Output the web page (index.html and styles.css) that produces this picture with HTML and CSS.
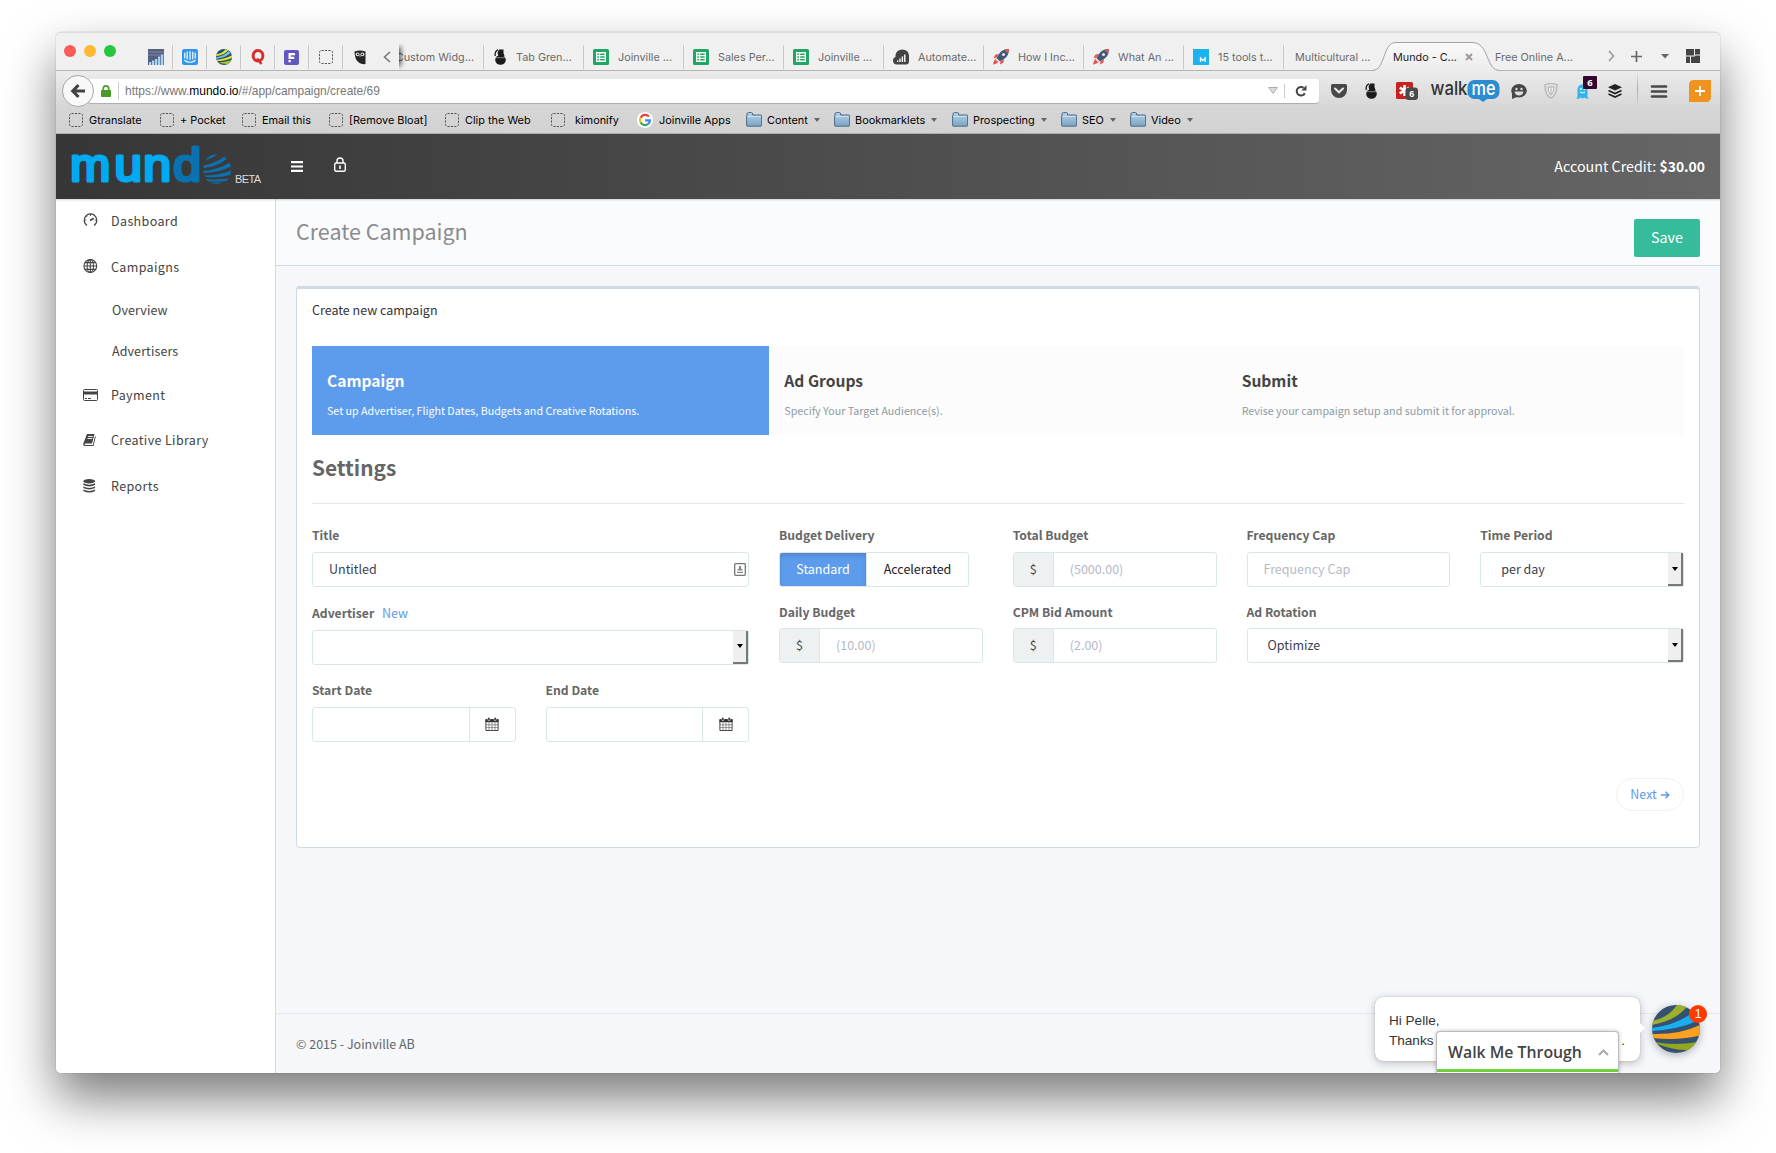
FILE: index.html
```
<!DOCTYPE html>
<html lang="en">
<head>
<meta charset="utf-8">
<title>Mundo - Create Campaign</title>
<link rel="stylesheet" href="styles.css">
</head>
<body>
<svg class="defs" width="0" height="0" aria-hidden="true">
  <defs>
    <linearGradient id="folderFill" x1="0" y1="0" x2="0" y2="1"><stop offset="0" stop-color="#b9d3e6"/><stop offset="1" stop-color="#7ba3c4"/></linearGradient>
    <linearGradient id="tabFill" x1="0" y1="0" x2="0" y2="1"><stop offset="0" stop-color="#fafafa"/><stop offset="1" stop-color="#ebebeb"/></linearGradient>
    <clipPath id="ball"><circle cx="24" cy="24" r="24"/></clipPath>
    <symbol id="i-blank" viewBox="0 0 14 14"><rect x=".5" y=".5" width="13" height="13" rx="2" fill="none" stroke="#555" stroke-dasharray="2.2 1.2"/></symbol>
    <symbol id="i-folder" viewBox="0 0 16 15"><path d="M1 4V2q0-1.400 1.400-1.400h3.200q1 0 1 1.400V3h8.400q.6 0 .6.600v10q0 .6-.6.600H1.200q-.6 0-.6-.6V4z" fill="url(#folderFill)" stroke="#4c6d88"/><path d="M1.200 4.500h13.600" stroke="#d6e6f2" stroke-width=".8"/></symbol>
    <symbol id="i-sheet" viewBox="0 0 16 16"><rect width="16" height="16" rx="1.500" fill="#23a566"/><path d="M3 3h10v10H3z" fill="#fff"/><path d="M4.300 4.500h1.700v1.500H4.300zM7.200 4.500h4.500v1.500H7.200zM4.300 7.200h1.700v1.500H4.300zM7.200 7.200h4.500v1.500H7.200zM4.300 9.900h1.700v1.500H4.300zM7.200 9.900h4.500v1.500H7.200z" fill="#23a566"/></symbol>
    <symbol id="i-globe" viewBox="0 0 48 48"><g clip-path="url(#ball)"><path d="M0 0h48v48H0z" fill="#34516f"/><path d="M0 16Q16 13 25 0H36Q26 15 0 20z" fill="#9db02c"/><path d="M0 23Q24 20 40 8l5 8Q28 24 0 26z" fill="#19aef2"/><path d="M0 29Q28 30 50 19v11Q28 36 0 33z" fill="#fba01f"/><path d="M3 37Q22 41 46 37l-8 8Q22 46 3 38z" fill="#93a61f"/></g></symbol>
    <symbol id="i-rocket" viewBox="0 0 16 16"><path d="M16 0Q9 0 6 5L3.500 9 7 12.500 11 10q5-3 5-10z" fill="#3f5a78"/><path d="M16 0q-2.500 0-4.500 1L15 4.500Q16 2.500 16 0zM6 5L2.500 5.500.5 9l3-.3zM11 10l-.5 3.500L7 15.500l.3-3z" fill="#e8554e"/><path d="M3.500 9.500Q1 10 0 15.500q5-1 6-3.200l-1.300.7-.6-1.500-1.500.3z" fill="#e8554e"/><circle cx="10.500" cy="5.500" r="1.500" fill="#dfe8ef"/></symbol>
    <symbol id="i-bomb" viewBox="0 0 14 16"><ellipse cx="7.500" cy="11" rx="5.300" ry="4.800" fill="#1b1b1b"/><path d="M4.500 3.500L6 .5h4.500V4l1 3-6 .5z" fill="#1b1b1b"/><path d="M5 .8Q1.500 2 2.200 7" fill="none" stroke="#1b1b1b" stroke-width="1.300"/><path d="M3 8.700h9" stroke="#aaa" stroke-width=".7"/></symbol>
    <symbol id="i-cal" viewBox="0 0 14 14"><path d="M.9 3h12.200v10.500H.9z" fill="#fff" stroke="#333" stroke-width=".9"/><path d="M.5 2h13v3.200H.5z" fill="#333"/><path d="M1 7.800h12M1 10.600h12M4 5v8.500M7 5v8.500M10 5v8.500" stroke="#555" stroke-width=".6"/><rect x="2.700" y=".3" width="2.200" height="3.400" rx="1" fill="#333" stroke="#fff" stroke-width=".6"/><rect x="9.100" y=".3" width="2.200" height="3.400" rx="1" fill="#333" stroke="#fff" stroke-width=".6"/></symbol>
  </defs>
</svg>

<div class="window">
  <header class="tabstrip">
    <div class="lights"><i class="red"></i><i class="amber"></i><i class="green"></i></div>
    <div class="pinned">
      <span><svg width="16" height="16" viewBox="0 0 16 16"><path d="M0 0h16v16H0z" fill="#55607f"/><path d="M0 3h16M0 6h16" stroke="#7f86a5"/><path d="M1 16v-3h2.300v3zM4 16v-4.500h2.300V16zM7 16v-6h2.300v6zM10 16V7.500h2.300V16zM13 16V5.500h2.300V16z" fill="#a9d2f5"/></svg></span>
      <span><svg width="16" height="16" viewBox="0 0 16 16"><rect width="16" height="16" rx="2" fill="#3296ed"/><path d="M2.800 4v5M5.200 3v7M8 2.600v7.800M10.800 3v7M13.200 4v5M2.800 11.500Q8 15 13.200 11.500" fill="none" stroke="#fff" stroke-width="1.200" stroke-linecap="round"/></svg></span>
      <span><svg width="16" height="16" viewBox="0 0 48 48"><g clip-path="url(#ball)"><path d="M0 0h48v48H0z" fill="#24506b"/><path d="M0 16Q20 14 31-2l8 2Q28 18 0 22z" fill="#e6e032"/><path d="M0 25Q24 22 38 6l5 7Q28 27 0 29z" fill="#6cc3ec"/><path d="M0 32Q28 31 48 18v8Q30 36 0 36z" fill="#f2e22c"/><path d="M4 40Q20 41 46 34l-8 11Q22 46 4 40z" fill="#a8c63c"/></g></svg></span>
      <span><svg width="14" height="16" viewBox="0 0 14 16"><ellipse cx="7" cy="6.800" rx="4.900" ry="5.300" fill="none" stroke="#d5302c" stroke-width="3"/><path d="M6 9.500l4.500 5.500" stroke="#d5302c" stroke-width="2.600"/></svg></span>
      <span><svg width="15" height="15" viewBox="0 0 15 15"><rect width="15" height="15" rx="2" fill="#6057c2"/><path d="M4.500 3h6.500v2.200H6.800v1.600h3.400V9H6.800H4.500zM4.500 10h2.300v2.300H4.500z" fill="#fff"/></svg></span>
      <span><svg width="14" height="14"><use href="#i-blank"/></svg></span>
      <span><svg width="12" height="15" viewBox="0 0 12 15"><path d="M.5 1.500Q6-.5 11.500 1.500V14q-4 .5-6-1Q.5 10 .5 1.500z" fill="#262626"/><circle cx="3.600" cy="4.300" r="1.900" fill="#eee"/><circle cx="8.400" cy="4.300" r="1.900" fill="#eee"/><circle cx="3.800" cy="4.300" r=".9"/><circle cx="8.200" cy="4.300" r=".9"/><path d="M5.200 5.500h1.600L6 7.500z" fill="#ccc"/></svg></span>
    </div>
    <div class="scroll-left"><svg width="8" height="12" viewBox="0 0 8 12"><path d="M7 1L1.500 6 7 11" fill="none" stroke="#777" stroke-width="1.600"/></svg></div>
    <nav class="tabs">
      <a class="cut"><span>Custom Widg...</span></a>
      <a><svg width="14" height="16"><use href="#i-bomb"/></svg><span>Tab Gren...</span></a>
      <a><svg width="16" height="16"><use href="#i-sheet"/></svg><span>Joinville ...</span></a>
      <a><svg width="16" height="16"><use href="#i-sheet"/></svg><span>Sales Per...</span></a>
      <a><svg width="16" height="16"><use href="#i-sheet"/></svg><span>Joinville ...</span></a>
      <a><svg width="16" height="16" viewBox="0 0 16 16"><path d="M4 15.500Q0 15.500 0 11.500 0 8.500 2.500 8 2 1 9 .5q6.500 0 7 6V12q0 3.500-3 3.500z" fill="#444"/><path d="M4 13v-1.500h1.300V13zM6.300 13V9.500h1.400V13zM8.700 13V7.500h1.400V13zM11.100 13V5.500h1.400V13z" fill="#fff"/></svg><span>Automate...</span></a>
      <a><svg width="16" height="16"><use href="#i-rocket"/></svg><span>How I Inc...</span></a>
      <a><svg width="16" height="16"><use href="#i-rocket"/></svg><span>What An ...</span></a>
      <a><svg width="16" height="16" viewBox="0 0 16 16"><path d="M0 0h16v16H0z" fill="#1ab3f0"/><path d="M7.500 13V9l2.300 2.600L12.100 9v4" fill="none" stroke="#fff" stroke-width="1.300"/></svg><span>15 tools t...</span></a>
      <a class="plain"><span>Multicultural ...</span></a>
      <a class="active"><svg class="shape" width="128" height="30" viewBox="0 0 128 30"><path d="M0 28.500C14 28.500 10 .5 24 .5H100C118 .5 113 28.500 128 28.500V30H0z" fill="url(#tabFill)"/><path d="M0 28.500C14 28.500 10 .5 24 .5H100C118 .5 113 28.500 128 28.500" fill="none" stroke="#a3a3a3"/></svg><span>Mundo - C...</span><svg class="x" width="8" height="8" viewBox="0 0 8 8"><path d="M1 1l6 6M7 1L1 7" stroke="#9a9a9a" stroke-width="2"/></svg></a>
      <a class="plain last"><span>Free Online A...</span></a>
    </nav>
    <div class="strip-tools">
      <svg width="7" height="12" viewBox="0 0 7 12"><path d="M1 1l4.500 5L1 11" fill="none" stroke="#999" stroke-width="1.600"/></svg>
      <svg width="11" height="11" viewBox="0 0 11 11"><path d="M5.500 0v11M0 5.500h11" stroke="#666" stroke-width="1.700"/></svg>
      <svg width="8" height="5" viewBox="0 0 8 5"><path d="M0 0h8L4 4.500z" fill="#666"/></svg>
      <svg width="14" height="14" viewBox="0 0 14 14"><path d="M0 0h8v6.500H0zM9 0h5v5.500H9zM0 7.500h4v6.500H0zM5 7.500h4v-1h5V14H5z" fill="#444"/></svg>
    </div>
  </header>

  <div class="navbar">
    <div class="back"><svg width="14" height="14" viewBox="0 0 14 14"><path d="M7.500 1L1.800 7l5.700 6M2 7h12" fill="none" stroke="#444" stroke-width="3.200"/></svg></div>
    <div class="urlbar">
      <svg class="secure" width="10" height="12" viewBox="0 0 10 12"><path d="M2.300 6V3.500a2.700 2.700 0 0 1 5.400 0V6" fill="none" stroke="#4c9a26" stroke-width="1.700"/><rect y="5" width="10" height="7" rx=".8" fill="#4c9a26"/></svg>
      <div class="url">https://www.<b>mundo.io</b>/#/app/campaign/create/69</div>
      <svg width="10" height="7" viewBox="0 0 10 7"><path d="M.7.500h8.600L5 6.400z" fill="#ddd" stroke="#aaa"/></svg>
      <div class="reload"><svg width="12" height="12" viewBox="0 0 12 12"><path d="M9.800 8.200A4.300 4.300 0 1 1 8.600 2.800" fill="none" stroke="#444" stroke-width="2"/><path d="M11.500.3v5.200H6.300z" fill="#444"/></svg></div>
    </div>
    <div class="addons">
      <svg width="16" height="14" viewBox="0 0 16 14"><path d="M1.500 0h13Q16 0 16 1.500V6a8 8 0 0 1-16 0V1.500Q0 0 1.500 0z" fill="#474747"/><path d="M4 4.500l4 3.800 4-3.800" fill="none" stroke="#e8e8e8" stroke-width="2" stroke-linecap="round"/></svg>
      <svg class="g17" width="14" height="16"><use href="#i-bomb"/></svg>
      <svg class="g18" width="22" height="18" viewBox="0 0 22 18"><rect width="17" height="17" rx="1.500" fill="#c9211e"/><path d="M8.500 3v11M3.700 5.700l9.600 5.600M13.300 5.700l-9.600 5.600" stroke="#fff" stroke-width="2.600"/><rect x="9.500" y="5.500" width="12.500" height="12.500" rx="3" fill="#4a4a4a"/><text x="15.700" y="15" text-anchor="middle" class="count">6</text></svg>
      <svg class="g13" width="69" height="24" viewBox="0 0 69 24"><rect x="36.500" y="1" width="32" height="19" rx="7" fill="#2b8ccf"/><path d="M47 19.500l5 3.500 5-3.500z" fill="#2b8ccf"/><text x="-.5" y="15.500" textLength="37" lengthAdjust="spacingAndGlyphs" class="wm-walk">walk</text><text x="40.500" y="15.500" textLength="24" lengthAdjust="spacingAndGlyphs" class="wm-me">me</text></svg>
      <svg class="g11" width="16" height="15" viewBox="0 0 16 15"><ellipse cx="8" cy="6.800" rx="7.800" ry="6.700" fill="#474747"/><path d="M1 9v6l5-2z" fill="#474747"/><circle cx="5.500" cy="5" r="1.200" fill="#ddd"/><circle cx="10.500" cy="5" r="1.200" fill="#ddd"/><path d="M3.500 7.500h9q-.8 4-4.500 4t-4.500-4z" fill="#ddd"/></svg>
      <svg class="g17" width="14" height="16" viewBox="0 0 14 16"><path d="M1 1.500Q7-.5 13 1.500 13.500 12 7 15 .5 12 1 1.500z" fill="#dedede" stroke="#b4b4b4" stroke-width="1.200"/><path d="M4 4h6q0 5-3 8-3-3-3-8z" fill="#f2f2f2" stroke="#b4b4b4"/><path d="M7 4v7" stroke="#b4b4b4"/></svg>
      <div class="ghost g18"><svg width="13" height="15" viewBox="0 0 13 15"><path d="M1.500 13V6Q1.500.5 6.500.5t5 5.500v7l1.500 1.500h-3L8.500 13.500l-2 1-2-1L3 14.800 0 14.500z" fill="#31b5ea"/><circle cx="4.800" cy="5" r="1" fill="#fff"/><circle cx="8.300" cy="5" r="1" fill="#fff"/><path d="M4 8q2.500 2 5 0" fill="none" stroke="#fff"/></svg><b>6</b></div>
      <svg class="g16" width="14" height="14" viewBox="0 0 14 14"><path d="M7 0l7 3.200-7 3.300L0 3.200z" fill="#222"/><path d="M.5 6.500L7 9.600l6.500-3.100M.5 10L7 13l6.500-3" fill="none" stroke="#222" stroke-width="1.700"/></svg>
      <i class="rule"></i>
      <svg class="g13" width="16" height="13" viewBox="0 0 16 13"><path d="M1 1.500h14M1 6.500h14M1 11.500h14" stroke="#474747" stroke-width="2.700" stroke-linecap="round"/></svg>
      <svg class="end" width="22" height="22" viewBox="0 0 22 22"><path d="M5 0h17v17q0 5-5 5H0V5q0-5 5-5z" fill="#f0931e"/><path d="M11 6v10M6 11h10" stroke="#fff" stroke-width="1.800"/></svg>
    </div>
  </div>

  <div class="bookmarks">
    <a><svg width="14" height="14"><use href="#i-blank"/></svg>Gtranslate</a>
    <a><svg width="14" height="14"><use href="#i-blank"/></svg>+ Pocket</a>
    <a><svg width="14" height="14"><use href="#i-blank"/></svg>Email this</a>
    <a><svg width="14" height="14"><use href="#i-blank"/></svg>[Remove Bloat]</a>
    <a><svg width="14" height="14"><use href="#i-blank"/></svg>Clip the Web</a>
    <a class="wide"><svg width="14" height="14"><use href="#i-blank"/></svg>kimonify</a>
    <a><svg width="16" height="16" viewBox="0 0 16 16"><circle cx="8" cy="8" r="8" fill="#fff"/><g fill="none" stroke-width="2.200"><path d="M12 4.600A5 5 0 0 0 3.600 5.700" stroke="#ea4335"/><path d="M3.600 5.700a5 5 0 0 0 0 4.800" stroke="#fbbc05"/><path d="M3.600 10.500a5 5 0 0 0 7.700 1.300" stroke="#34a853"/><path d="M11.300 11.800A5 5 0 0 0 13 8.300H8" stroke="#4285f4"/></g></svg>Joinville Apps</a>
    <a><svg width="16" height="15"><use href="#i-folder"/></svg>Content<i></i></a>
    <a><svg width="16" height="15"><use href="#i-folder"/></svg>Bookmarklets<i></i></a>
    <a><svg width="16" height="15"><use href="#i-folder"/></svg>Prospecting<i></i></a>
    <a><svg width="16" height="15"><use href="#i-folder"/></svg>SEO<i></i></a>
    <a><svg width="16" height="15"><use href="#i-folder"/></svg>Video<i></i></a>
  </div>

  <div class="app">
    <header class="appbar">
      <svg class="logo" width="192" height="46" viewBox="0 0 192 46">
        <text y="38.800" class="lg-mun"><tspan x="1.200" textLength="40" lengthAdjust="spacingAndGlyphs">m</tspan></text>
        <text y="38.800" class="lg-mun"><tspan x="45.500" textLength="27.500" lengthAdjust="spacingAndGlyphs">u</tspan></text>
        <text y="38.800" class="lg-mun"><tspan x="74" textLength="28" lengthAdjust="spacingAndGlyphs">n</tspan></text>
        <text x="104" y="38.800" textLength="28" lengthAdjust="spacingAndGlyphs" class="lg-d">d</text>
        <path fill="#0a72b0" d="M136.500 18Q140 12.500 148.500 12.200 143 16.500 136.500 18zM134.500 23.500Q147 21 155.500 14.500L157.500 17Q148 25 134.500 26zM134 29Q150 27.500 160.500 20.500L162 24.500Q149 31 134.500 31zM135 33.500Q150 33.500 162 28.500L161.500 33Q149 36 137 35zM137 37q11 1.300 22.500-.5l-2 2.500q-10 1-18.500.2zM141.500 40.500h12q-6 2.500-12 0z"/>
        <text x="166" y="40.500" textLength="26" class="lg-beta">BETA</text>
      </svg>
      <svg class="burger" width="12" height="11" viewBox="0 0 12 11"><path d="M0 1.200h12M0 5.500h12M0 9.800h12" stroke="#fff" stroke-width="2.200"/></svg>
      <svg class="lock" width="12" height="15" viewBox="0 0 12 15"><rect x=".7" y="6" width="10.600" height="8.300" rx="1.500" fill="none" stroke="#fff" stroke-width="1.400"/><path d="M3 6V4a3 3 0 0 1 6 0v2" fill="none" stroke="#fff" stroke-width="1.400"/><path d="M6 8.500v3.500" stroke="#fff" stroke-width="1.600"/></svg>
      <div class="credit">Account Credit: <b>$30.00</b></div>
    </header>

    <div class="body">
      <aside class="sidebar">
        <a class="first"><svg width="15" height="14" viewBox="0 0 15 14"><path d="M4 12.500A6.300 6.300 0 1 1 11 12.500" fill="none" stroke="#444" stroke-width="1.300"/><path d="M7 7.500l3.800-2.200" stroke="#444" stroke-width="1.600"/><path d="M7.500 1v2M1.500 7h1.800M11.800 7h1.800M3.200 3l1 1" stroke="#444" stroke-width=".9"/></svg>Dashboard</a>
        <a class="second"><svg width="15" height="14" viewBox="0 0 15 14"><g fill="none" stroke="#444" stroke-width="1.100"><circle cx="7.300" cy="7" r="6.400"/><ellipse cx="7.300" cy="7" rx="3.200" ry="6.400"/><path d="M7.300.6v12.800M.9 7h12.800M2 3.600h10.600M2 10.400h10.600"/></g></svg>Campaigns</a>
        <a class="sub">Overview</a>
        <a class="sub">Advertisers</a>
        <a><svg width="15" height="12" viewBox="0 0 15 12"><rect x=".5" y=".5" width="14" height="11" rx="1" fill="none" stroke="#444"/><path d="M0 2.500h15v3H0z" fill="#444"/><path d="M2 9.500h2M5 9.500h3" stroke="#444"/></svg>Payment</a>
        <a><svg width="15" height="12" viewBox="0 0 15 12"><path d="M4 0h7.500L9 9.500H2.500q-1 0-1 .7t1 .7h7.300L12 2.200l.8.300L10.500 12H2Q-.3 12 .3 9.500z" fill="#444"/><path d="M5 2.500h4.800M4.500 4.500h4.800" stroke="#fff" stroke-width=".9"/></svg>Creative Library</a>
        <a><svg width="15" height="14" viewBox="0 0 15 14"><ellipse cx="6.200" cy="2.300" rx="6" ry="2.200" fill="#444"/><path d="M.3 4.300q5.900 2.800 11.800 0v1.800q-5.900 2.800-11.800 0zM.3 7.500q5.900 2.800 11.800 0v1.600q-5.900 2.800-11.800 0zM.3 10.500q5.900 2.800 11.800 0v1.400q-5.900 3.400-11.800 0z" fill="#444"/></svg>Reports</a>
      </aside>

      <main class="main">
        <div class="pagehead"><h1>Create Campaign</h1><button class="save">Save</button></div>
        <section class="card">
          <p class="cardtitle">Create new campaign</p>
          <div class="steps">
            <div class="on"><h3>Campaign</h3><p>Set up Advertiser, Flight Dates, Budgets and Creative Rotations.</p></div>
            <div><h3>Ad Groups</h3><p>Specify Your Target Audience(s).</p></div>
            <div><h3>Submit</h3><p>Revise your campaign setup and submit it for approval.</p></div>
          </div>
          <h2>Settings</h2>
          <div class="form">
            <div class="fields left">
              <div class="field two"><label>Title</label><div class="input">Untitled<svg class="contact" width="12" height="13" viewBox="0 0 12 13"><rect x=".7" y=".7" width="10.600" height="11.600" rx=".8" fill="#fff" stroke="#777" stroke-width="1.300"/><path d="M3.500 7.500h5v-1L7 5.500V3H5v2.500L3.500 6.500zM3 8.700h6v1.200H3z" fill="#888"/></svg></div></div>
              <div class="field adv two"><label>Advertiser <a>New</a></label><div class="input select"><i></i></div></div>
              <div class="field"><label>Start Date</label><div class="input date"><span><svg width="14" height="14"><use href="#i-cal"/></svg></span></div></div>
              <div class="field"><label>End Date</label><div class="input date"><span><svg width="14" height="14"><use href="#i-cal"/></svg></span></div></div>
            </div>
            <div class="fields right">
              <div class="field"><label>Budget Delivery</label><div class="toggle"><b>Standard</b><span>Accelerated</span></div></div>
              <div class="field"><label>Total Budget</label><div class="input money"><span>$</span>(5000.00)</div></div>
              <div class="field"><label>Frequency Cap</label><div class="input ph">Frequency Cap</div></div>
              <div class="field"><label>Time Period</label><div class="input select">per day<i></i></div></div>
              <div class="field low"><label>Daily Budget</label><div class="input money"><span>$</span>(10.00)</div></div>
              <div class="field low"><label>CPM Bid Amount</label><div class="input money"><span>$</span>(2.00)</div></div>
              <div class="field low two"><label>Ad Rotation</label><div class="input select">Optimize<i></i></div></div>
            </div>
          </div>
          <div class="actions"><a class="next">Next <svg width="9" height="8" viewBox="0 0 9 8"><path d="M0 4h7.500M4.500.8L7.800 4 4.500 7.200" fill="none" stroke="#5c9aec" stroke-width="1.400"/></svg></a></div>
        </section>
        <footer class="foot">© 2015 - Joinville AB</footer>
      </main>
    </div>

    <div class="bubble">Hi Pelle,<br><span>Thanks</span><span>.</span></div>
    <div class="launcher"><svg width="48" height="48"><use href="#i-globe"/></svg><b>1</b></div>
    <div class="walkme">Walk Me Through<svg width="11" height="7" viewBox="0 0 11 7"><path d="M1 6l4.500-4.500L10 6" fill="none" stroke="#aaa" stroke-width="2"/></svg></div>
  </div>
</div>
</body>
</html>
```
FILE: styles.css
```
* { box-sizing: border-box; }
body {
  margin: 0;
  height: 1153px;
  padding: 32px 56px 80px;
  background: #fff;
  font: 12.5px/18px "Noto Sans CJK SC", sans-serif;
  color: #444;
  overflow: hidden;
}
h1, h2, h3, p { margin: 0; }
svg { display: block; flex: none; overflow: visible; }
.defs { position: absolute; }

.window {
  width: 1664px;
  height: 1041px;
  border-radius: 5px;
  overflow: hidden;
  display: flex;
  flex-direction: column;
  box-shadow: 0 0 1px rgba(0,0,0,.55), 0 25px 50px rgba(0,0,0,.52);
}

/* Browser tab strip */
.tabstrip {
  height: 39px;
  flex: none;
  display: flex;
  align-items: stretch;
  background: #f0f0f0;
  border-top: 1px solid #dcdcdc;
  border-bottom: 1px solid #b4b4b4;
  font: 10.8px/16px Inter, sans-serif;
  color: #6a6a6a;
}
.lights { width: 83px; padding: 0 0 1px 8px; display: flex; gap: 8px; align-items: center; }
.lights i { width: 12px; height: 12px; border-radius: 50%; }
.red { background: #fc5b57; }
.amber { background: #fdb92f; }
.green { background: #27c63e; }
.pinned { display: flex; padding-top: 12px; }
.pinned span { width: 34px; height: 24px; display: flex; align-items: center; justify-content: center; border-right: 1px solid #c9c9c9; }
.pinned span:last-child { border: 0; }
.scroll-left { position: relative; z-index: 1; width: 22px; height: 27px; margin-top: 10px; padding: 1px 0 0 6px; display: flex; align-items: center; background: #f0f0f0; box-shadow: 6px 0 5px -4px rgba(0,0,0,.65); clip-path: inset(0 -10px 0 0); }
.tabs { display: flex; padding-top: 12px; width: 1201px; }
.tabs a { width: 100px; height: 24px; padding-left: 9px; display: flex; align-items: center; gap: 9px; border-right: 1px solid #c9c9c9; white-space: nowrap; }
.tabs a > span { padding-top: 1px; }
.tabs a.cut { width: 85px; padding: 0 9px 0 0; justify-content: flex-end; }
.tabs a.plain { padding-left: 11px; border: 0; }
.tabs a.active { position: relative; padding-left: 9px; border: 0; color: #222; width: 102px; gap: 9px; }
.tabs a.active > span { position: relative; }
.shape { position: absolute; left: -12px; top: -3px; }
.tabs .x { position: relative; margin-left: -1px; }
.tabs a.last { padding-left: 9px; }
.strip-tools { display: flex; align-items: center; gap: 20px; padding: 9px 0 0 8px; }
.strip-tools svg:nth-child(n+3) { margin-left: -1px; }
.strip-tools svg:nth-child(4) { margin-left: -3px; }
.strip-tools svg:nth-child(1) { margin-right: -4px; }

/* Address bar */
.navbar {
  height: 37px;
  flex: none;
  display: flex;
  align-items: center;
  padding: 3px 9px 0 6px;
  background: linear-gradient(#ececec, #d6d6d6);
}
.back { position: relative; width: 32px; height: 32px; border: 1px solid #a8a8a8; border-radius: 50%; background: #f8f8f8; display: grid; place-items: center; z-index: 1; }
.urlbar { width: 1231px; height: 24px; margin-left: -6px; margin-top: -1px; padding-left: 13px; display: flex; align-items: center; background: #fff; border-radius: 3px; box-shadow: 0 1px 1px rgba(0,0,0,.22); }
.url { flex: 1; margin-left: 7px; height: 18px; border-left: 1px solid #ccc; padding-left: 6px; font: 11.95px/18px "Liberation Sans", sans-serif; color: #777; }
.url b { font-weight: 400; color: #000; }
.reload { margin-left: 6px; height: 14px; padding: 1px 12px 0 10px; border-left: 1px solid #ccc; }
.addons { flex: 1; display: flex; align-items: center; padding-left: 12px; }
.g11 { margin-left: 11px; }
.g13 { margin-left: 13px; }
.g16 { margin-left: 16px; }
.g17 { margin-left: 17px; }
.g18 { margin-left: 18px; }
.addons .end { margin-left: auto; }
.addons .rule { width: 1px; height: 36px; margin: -4px 0 0 15px; background: linear-gradient(transparent, #aaa, transparent); }
.count { font: 700 9px "Liberation Sans"; fill: #fff; }
.wm-walk { font: 500 19px "Inter"; fill: #333; }
.wm-me { font: 500 19px "Inter"; fill: #fff; }
.ghost { position: relative; width: 16px; }
.ghost b { position: absolute; left: 7px; top: -8px; width: 14px; height: 13px; background: #33082f; border-radius: 1px; color: #fff; font: 700 9.500px/13px "Open Sans", sans-serif; text-align: center; }

/* Bookmarks bar */
.bookmarks {
  height: 26px;
  flex: none;
  display: grid;
  grid-template-columns: 91px 82px 87px 116px 106px 86px 109px 88px 118px 109px 69px 70px;
  padding: 0 0 2px 13px;
  background: linear-gradient(#d6d6d6, #d2d2d2);
  border-bottom: 1px solid #b0b0b0;
  font: 10.9px/16px Inter, sans-serif;
  color: #000;
}
.bookmarks a { display: flex; align-items: center; gap: 6px; white-space: nowrap; }
.bookmarks a.wide { gap: 10px; }
.bookmarks i { border: 3.500px solid transparent; border-top: 4px solid #666; border-bottom: 0; margin-left: 1px; }
.bookmarks a:nth-child(n+8) { gap: 5px; }

/* Application */
.app { flex: 1; display: flex; flex-direction: column; position: relative; background: #f5f7fb; min-height: 0; }
.appbar { height: 65px; flex: none; display: flex; align-items: center; padding: 0 15px 0 13px; background: linear-gradient(90deg, #363636, #666); box-shadow: 0 1px 2px rgba(0,0,0,.18); z-index: 1; color: #fff; }
.logo { margin-top: -3px; }
.lg-mun, .lg-d { font: 400 46px "Liberation Sans", sans-serif; fill: #00aaf2; stroke: #00aaf2; stroke-width: 3.200px; stroke-linejoin: round; }
.lg-d { fill: #0a72b0; stroke: #0a72b0; }
.lg-beta { font: 400 11px "Liberation Sans", sans-serif; fill: #ddd; }
.burger { margin-left: 30px; margin-top: -1px; }
.lock { margin: -4px 0 0 31px; }
.credit { margin: -2px 0 0 auto; font-size: 14.290px; line-height: 20px; }
.credit b { font-weight: 700; font-size: 13.900px; }
.body { flex: 1; display: flex; min-height: 0; }
.sidebar { width: 220px; flex: none; background: #fff; border-right: 1px solid #d3dae0; letter-spacing: .37px; }
.sidebar a { height: 45.500px; padding-left: 27px; display: flex; align-items: center; gap: 13px; }
.sidebar a.first { height: 43.500px; }
.sidebar a.second { height: 47.500px; padding-top: 2px; }
.sidebar a.first svg { margin-top: -1px; }
.sidebar a.second svg { margin-top: -2px; }
.sidebar a.sub { height: 41px; padding: 0 0 2px 56px; letter-spacing: .1px; }

.main { flex: 1; display: flex; flex-direction: column; }
.pagehead { height: 67px; flex: none; padding: 0 20px 1px; display: flex; justify-content: space-between; background: #fafbfd; border-bottom: 1px solid #cfdbe3; }
.pagehead h1 { font-weight: 400; font-size: 21.500px; line-height: 30px; color: #8c8c8c; padding-top: 17px; }
.save { margin-top: 20px; width: 66px; height: 38px; padding: 0 0 2px; border: 0; border-radius: 2px; background: #37bc9b; color: #fff; font: 14.290px/20px "Noto Sans CJK SC", sans-serif; }
.card { margin: 20px 20px 0; height: 562px; padding: 11px 15px 0; background: #fff; border: 1px solid #cfdbe3; border-top-width: 3px; border-radius: 4px; }
.cardtitle { line-height: 20px; color: #333; }
.steps { display: flex; margin-top: 26px; background: #fcfcfc; }
.steps div { flex: 1; height: 89px; padding: 22px 15px 0; color: #8d9aa5; }
.steps h3 { font-weight: 700; font-size: 15.600px; line-height: 24px; color: #444; }
.steps p { font-size: 10.700px; line-height: 16px; margin-top: 11px; }
.steps .on { background: #5d9cec; color: #fff; }
.steps .on h3 { color: #fff; }
.card h2 { font-weight: 700; font-size: 20.800px; line-height: 30px; color: #666; margin-top: 17px; padding-bottom: 21px; border-bottom: 1px solid #e4e8ea; }
.form { display: flex; gap: 30px; margin-top: 22px; }
.fields { display: grid; column-gap: 30px; align-content: start; }
.left { width: 437px; grid-template-columns: 1fr 1fr; row-gap: 16.500px; }
.right { flex: 1; grid-template-columns: repeat(4, 1fr); row-gap: 16px; }
.field.two { grid-column: span 2; }
.field label { display: block; height: 26px; line-height: 18px; font-weight: 700; font-size: 12.200px; color: #666; }
.field.low label { height: 25px; }
.field.adv label { line-height: 17px; }
.field label a { font-weight: 400; font-size: 12.500px; color: #5d9cec; margin-left: 5px; }
.input { height: 35px; border: 1px solid #dbe6e8; border-radius: 3px; padding: 0 0 2px 16px; display: flex; align-items: center; justify-content: space-between; background: #fff; color: #3a3f51; }
.input.ph, .input.money { color: #b5b9c8; }
.contact { margin: 0 2px -1px 0; }
.input.money { padding: 0 0 2px; justify-content: flex-start; gap: 16px; }
.money span { width: 40px; height: 33px; margin-bottom: -2px; padding-bottom: 2px; display: grid; place-items: center; background: #edf1f2; border-right: 1px solid #dbe6e8; color: #3a3f51; }
.input.select { padding-left: 20px; }
.select i { width: 15px; height: 33px; margin: 0 0 -2px auto; background: #efefef; border: solid #777; border-width: 0 2px 2px 0; display: grid; place-items: center; }
.select i::after { content: ""; border: 3px solid transparent; border-top: 4px solid #000; border-bottom: 0; }
.input.date { padding: 0; justify-content: flex-end; }
.date span { width: 46px; height: 33px; padding-bottom: 2px; display: grid; place-items: center; border-left: 1px solid #dbe6e8; }
.toggle { display: flex; width: 190px; height: 35px; border: 1px solid #dbe6e8; border-radius: 3px; line-height: 31px; text-align: center; color: #222; overflow: hidden; }
.toggle b { width: 87px; background: #5d9cec; color: #fff; font-weight: 400; box-shadow: inset 0 3px 5px rgba(0,0,0,.13); border-right: 1px solid #dbe6e8; }
.toggle span { flex: 1; }
.actions { display: flex; justify-content: flex-end; margin-top: 36px; }
.next { width: 68px; height: 33px; padding-bottom: 2px; border: 1px solid #edf0f2; border-radius: 17px; display: flex; align-items: center; justify-content: center; gap: 4px; color: #5d9cec; }
.next svg { margin-top: 2px; }
.foot { margin-top: auto; height: 60px; border-top: 1px solid #e4e8ee; padding: 0 20px; line-height: 60px; color: #666; }

/* Chat and guide overlays */
.bubble { position: absolute; left: 1319px; top: 863px; width: 265px; height: 64px; border-radius: 8px; background: #fff; box-shadow: 0 0 1px rgba(0,0,0,.35), 0 2px 8px rgba(0,0,0,.25); padding: 14px 14px; font: 13.570px/20px "Liberation Sans", sans-serif; color: #333; }
.bubble span + span { position: absolute; right: 15px; }
.bubble::after { content: ""; position: absolute; right: -5px; top: 26px; border: 5px solid transparent; border-left-color: #fff; border-right: 0; }
.launcher { position: absolute; left: 1596px; top: 871px; width: 48px; height: 48px; border-radius: 50%; box-shadow: 0 2px 8px rgba(0,0,0,.3); }
.launcher b { position: absolute; left: 37px; top: 0; width: 18px; height: 18px; border-radius: 50%; background: #ff3b00; color: #fff; font: 400 12px/18px "Liberation Sans", sans-serif; text-align: center; }
.walkme { position: absolute; left: 1380px; top: 897px; width: 183px; height: 42px; border: 1px solid #bbb; border-bottom: 0; border-radius: 4px 4px 0 0; background: linear-gradient(#6fd13a, #6fd13a) 50% 37px / 181px 3px no-repeat #fff; padding: 0 9px 2px 11px; display: flex; align-items: center; justify-content: space-between; font: 600 15.840px/36px "Open Sans", sans-serif; color: #444; box-shadow: 0 0 4px rgba(0,0,0,.25); }
.walkme svg { margin-top: 2px; }
```
